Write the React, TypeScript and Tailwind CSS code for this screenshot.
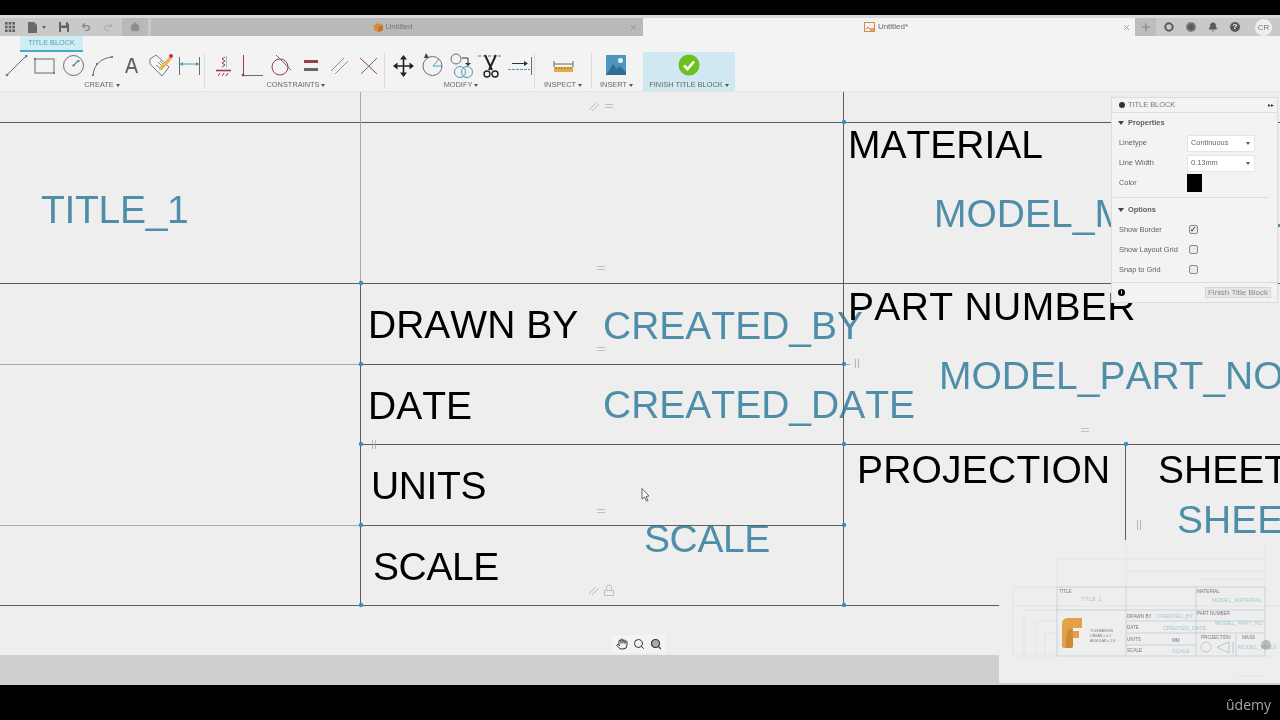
import React from 'react';
import { Bell, Hand, Home, Plus, Redo2, Search, Undo2, X } from 'lucide-react';

const LINE = '#6b6b6b';
const PT = '#4a8aa8';
const RED = '#97404a';

function Dot({ x, y }: { x: number; y: number }) {
  return <circle cx={x} cy={y} r="2.2" fill="#2f93c4" />;
}

function Tool({ children }: { children: React.ReactNode }) {
  return (
    <svg viewBox="0 0 29 27" className="w-[29px] h-[27px] shrink-0" fill="none">
      {children}
    </svg>
  );
}

function Group({ width, label, children, active }: { width: string; label: string; children: React.ReactNode; active?: boolean }) {
  return (
    <div className={`${width} ${active ? 'bg-[#cfe8f1]' : ''} flex flex-col shrink-0`}>
      <div className="h-[27px] flex justify-center">{children}</div>
      <div className="h-[12px] flex items-center justify-center gap-[2px] text-[7.4px] leading-none text-[#666666] whitespace-nowrap">
        {label}
        <span className="w-0 h-0 border-x-[2px] border-x-transparent border-t-[3px] border-t-[#555555]" />
      </div>
    </div>
  );
}

function Sep() {
  return <div className="w-px h-[36px] mt-[1px] bg-[#dcdcdc] shrink-0" />;
}

function CreateTools() {
  return (
    <>
      <Tool>
        <path d="M6 23 25 4" stroke={LINE} />
        <rect x="4.8" y="21.8" width="2.4" height="2.4" fill={PT} />
        <rect x="24" y="3" width="2.4" height="2.4" fill={PT} />
      </Tool>
      <Tool>
        <rect x="5" y="7" width="19" height="14" stroke={LINE} />
        <rect x="4" y="6" width="2" height="2" fill={PT} />
        <rect x="23" y="20" width="2" height="2" fill={PT} />
      </Tool>
      <Tool>
        <circle cx="14.5" cy="13.5" r="10" stroke={LINE} />
        <path d="M14.5 13.5 19 9" stroke={PT} strokeWidth="1.2" />
        <rect x="13.5" y="12.5" width="2" height="2" fill={PT} />
        <rect x="18.5" y="8" width="2" height="2" fill={PT} />
      </Tool>
      <Tool>
        <path d="M5 23C6 12 14 6 24 5" stroke={LINE} />
        <rect x="4" y="22" width="2" height="2" fill={PT} />
        <rect x="8" y="11" width="2" height="2" fill={PT} />
        <rect x="23" y="4" width="2" height="2" fill={PT} />
      </Tool>
      <Tool>
        <path d="M9 21 14 7h1.4L20 21M10.8 16h7.8" stroke="#5c6670" strokeWidth="2" />
      </Tool>
      <Tool>
        <path d="M4 7 10 3l13 12-7 9L4 12Z" fill="#f7f7f7" stroke="#777777" />
        <path d="M10 13l6 5M12 10l5 5M14 9l4 4" stroke="#888888" />
        <path d="M14 15 23 5l3 2-9 10-4 1Z" fill="#e9b84f" />
        <circle cx="25" cy="4" r="2" fill="#c5303a" />
      </Tool>
      <Tool>
        <path d="M4.5 5v18M24.5 5v18" stroke={LINE} />
        <path d="M5 12h19" stroke="#4a9ab8" />
        <path d="M5 12l3-2v4ZM24 12l-3-2v4Z" fill="#4a9ab8" />
      </Tool>
    </>
  );
}

function ConstraintTools() {
  return (
    <>
      <Tool>
        <path d="M16 5l-3 2 3 2-3 2 3 2-3 2" stroke={RED} />
        <path d="M17.5 4v11" stroke="#b0b0b0" />
        <path d="M7 18.5h15" stroke={RED} strokeWidth="1.6" />
        <path d="M9 24l2-3M13 24l2-3M17 24l2-3" stroke={RED} />
      </Tool>
      <Tool>
        <path d="M5.5 3v20" stroke={RED} />
        <path d="M5 23.5h20" stroke={LINE} />
        <rect x="3.8" y="21.8" width="2.4" height="2.4" fill={RED} />
      </Tool>
      <Tool>
        <circle cx="13" cy="15" r="8" stroke={RED} />
        <path d="M9 3l15 15" stroke={LINE} />
      </Tool>
      <Tool>
        <rect x="8" y="8" width="14" height="3" fill={RED} />
        <rect x="8" y="16" width="14" height="3" fill="#666666" />
      </Tool>
      <Tool>
        <path d="M6 19 19 6" stroke="#8a8a8a" />
        <path d="M10 22 23 9" stroke="#a98a8e" />
      </Tool>
      <Tool>
        <path d="M6 6 23 22" stroke={RED} />
        <path d="M7 22 23 6" stroke={LINE} />
      </Tool>
    </>
  );
}

function ModifyTools() {
  return (
    <>
      <Tool>
        <path d="M14.5 5v18M6 14h17" stroke="#222222" strokeWidth="1.6" />
        <path d="M14.5 3l3.5 4.5h-7ZM14.5 25l3.5-4.5h-7ZM4 14l4.5-3.5v7ZM25 14l-4.5-3.5v7Z" fill="#222222" />
      </Tool>
      <Tool>
        <circle cx="14.5" cy="14" r="9.5" stroke={LINE} />
        <path d="M15 14h9M15 14l6-7" stroke="#4a9ab8" />
        <path d="M8 1l-2 5 5 0Z" fill="#444444" />
      </Tool>
      <Tool>
        <circle cx="9" cy="7" r="5" stroke={LINE} />
        <path d="M15 6h6v6" stroke="#333333" />
        <path d="M21 14l-3-3h6Z" fill="#333333" />
        <circle cx="13" cy="20" r="5.5" stroke="#4a9ab8" />
        <circle cx="20" cy="20" r="5.5" stroke="#4a9ab8" />
      </Tool>
      <Tool>
        <path d="M2 4h24" stroke={LINE} strokeDasharray="3 2" />
        <path d="M9 3l7 15M20 3l-7 15" stroke="#222222" strokeWidth="2" />
        <circle cx="11" cy="22" r="3" stroke="#222222" strokeWidth="1.4" />
        <circle cx="19" cy="22" r="3" stroke="#222222" strokeWidth="1.4" />
      </Tool>
      <Tool>
        <path d="M7 11.5h14" stroke="#333333" />
        <path d="M23 11.5l-4-2.5v5Z" fill="#333333" />
        <path d="M26.5 5v18" stroke={LINE} />
        <path d="M3 17.5h22" stroke="#4a9ab8" strokeDasharray="3 1" />
      </Tool>
    </>
  );
}

function Toolbar() {
  return (
    <div className="h-[56px] bg-[#f3f3f3] border-b border-[#e6e6e6] shrink-0 flex flex-col">
      <div className="h-[16px] pl-[20px] shrink-0">
        <div className="w-[63px] h-[16px] bg-[#d2ecf3] border-b-2 border-[#45aac6] flex items-center justify-center text-[7.3px] leading-none text-[#4ba3bd] whitespace-nowrap">
          TITLE BLOCK
        </div>
      </div>
      <div className="flex h-[39px]">
        <Group width="w-[204px]" label="CREATE">
          <CreateTools />
        </Group>
        <Sep />
        <div className="w-[3px] shrink-0" />
        <Group width="w-[176px]" label="CONSTRAINTS">
          <ConstraintTools />
        </Group>
        <Sep />
        <div className="w-[3px] shrink-0" />
        <Group width="w-[146px]" label="MODIFY">
          <ModifyTools />
        </Group>
        <Sep />
        <Group width="w-[56px]" label="INSPECT">
          <Tool>
            <path d="M5 9v6M24 9v6M5 12h19" stroke={LINE} />
            <rect x="5" y="15" width="19" height="5" fill="#e1ad45" />
            <path d="M7 15v2M10 15v2M13 15v2M16 15v2M19 15v2M22 15v2" stroke="#99742a" />
          </Tool>
        </Group>
        <Sep />
        <Group width="w-[49px]" label="INSERT">
          <Tool>
            <rect x="4" y="3" width="20" height="20" fill="#4a98bf" />
            <path d="M4 23 11 12l4 5 3-3 6 6v3Z" fill="#2f6f96" />
            <circle cx="18.5" cy="8.5" r="2.5" fill="#e8f2f7" />
          </Tool>
        </Group>
        <div className="w-[2px] shrink-0" />
        <Group width="w-[92px]" label="FINISH TITLE BLOCK" active>
          <svg viewBox="0 0 22 22" className="w-[22px] h-[22px] mt-[2px]">
            <circle cx="11" cy="11" r="10.5" fill="#6cc11f" />
            <path d="M6 11.5 9.5 15 16 7.5" stroke="#ffffff" strokeWidth="2.6" fill="none" />
          </svg>
        </Group>
      </div>
    </div>
  );
}

function TabBar() {
  return (
    <div className="h-[18px] bg-[#c9c9c9] flex shrink-0 text-[8px] text-[#777777]">
      <div className="w-[122px] flex items-center shrink-0 text-[#666666]">
        <svg viewBox="0 0 10 10" className="w-[10px] h-[10px] ml-[5px]" fill="#606060">
          <rect x="0" y="0" width="2.6" height="2.6" /><rect x="3.7" y="0" width="2.6" height="2.6" /><rect x="7.4" y="0" width="2.6" height="2.6" />
          <rect x="0" y="3.7" width="2.6" height="2.6" /><rect x="3.7" y="3.7" width="2.6" height="2.6" /><rect x="7.4" y="3.7" width="2.6" height="2.6" />
          <rect x="0" y="7.4" width="2.6" height="2.6" /><rect x="3.7" y="7.4" width="2.6" height="2.6" /><rect x="7.4" y="7.4" width="2.6" height="2.6" />
        </svg>
        <svg viewBox="0 0 9 11" className="w-[9px] h-[11px] ml-[13px]" fill="#6a6a6a">
          <path d="M0 0h6l3 3v8H0Z" />
        </svg>
        <span className="ml-[5px] w-0 h-0 border-x-[2px] border-x-transparent border-t-[3px] border-t-[#666666]" />
        <svg viewBox="0 0 10 10" className="w-[10px] h-[10px] ml-[13px]">
          <path d="M0 0h8l2 2v8H0Z" fill="#666666" />
          <rect x="2" y="0" width="5" height="3.5" fill="#c9c9c9" />
          <rect x="2" y="6" width="6" height="4" fill="#c9c9c9" />
        </svg>
        <Undo2 className="w-[10px] h-[10px] ml-[12px] text-[#777777]" strokeWidth={2.5} />
        <Redo2 className="w-[10px] h-[10px] ml-[12px] text-[#a0a0a0]" strokeWidth={2} />
      </div>
      <div className="w-[26px] bg-[#b9b9b9] flex items-center justify-center shrink-0">
        <Home className="w-[10px] h-[10px] text-[#8e8e8e] fill-[#8e8e8e]" />
      </div>
      <div className="w-[3px] shrink-0" />
      <div className="w-[492px] bg-[#b9b9b9] flex items-center justify-center relative shrink-0 pr-[7px]">
        <svg viewBox="0 0 10 10" className="w-[9px] h-[9px] mr-[2px]">
          <path d="M5 0 10 2.5V8L5 10 0 8V2.5Z" fill="#dd8838" />
          <path d="M5 5 10 2.5V8L5 10Z" fill="#c56f25" />
        </svg>
        Untitled
        <X className="absolute right-[5px] w-[9px] h-[9px] text-[#8a8a8a]" />
      </div>
      <div className="w-[492px] bg-[#f3f3f3] flex items-center justify-center relative shrink-0 text-[#666666] pr-[6px]">
        <svg viewBox="0 0 11 10" className="w-[11px] h-[10px] mr-[3px]" fill="none">
          <rect x="0.5" y="0.5" width="10" height="9" stroke="#d68a45" />
          <path d="M2 7.5 4 5l2 2.5" stroke="#888888" />
          <rect x="6" y="6" width="4" height="3" fill="#e4a25f" />
        </svg>
        Untitled*
        <X className="absolute right-[4px] w-[9px] h-[9px] text-[#888888]" />
      </div>
      <div className="w-[21px] bg-[#bdbdbd] flex items-center justify-center shrink-0">
        <Plus className="w-[12px] h-[12px] text-[#8a8a8a]" strokeWidth={2.5} />
      </div>
      <div className="flex-1 flex items-center pl-[8px] gap-[12px] text-[#5f5f5f]">
        <svg viewBox="0 0 10 10" className="w-[10px] h-[10px]" fill="none">
          <circle cx="5" cy="5" r="3.7" stroke="#5a5a5a" strokeWidth="2" />
          <path d="M6 0h4v3Z" fill="#c9c9c9" />
        </svg>
        <svg viewBox="0 0 10 10" className="w-[10px] h-[10px]">
          <circle cx="5" cy="5" r="5" fill="#7c7c7c" />
          <circle cx="5" cy="5" r="3" fill="#5a5a5a" />
        </svg>
        <Bell className="w-[10px] h-[10px] text-[#5a5a5a] fill-[#5a5a5a]" />
        <div className="w-[10px] h-[10px] rounded-full bg-[#5a5a5a] text-white text-[8px] font-bold leading-[10px] text-center">?</div>
        <div className="ml-[3px] w-[17px] h-[17px] rounded-full bg-[#eeeeee] text-[#777777] text-[8px] leading-[17px] text-center">CR</div>
      </div>
    </div>
  );
}

function Check({ on }: { on?: boolean }) {
  return (
    <div className="w-[9px] h-[9px] -mt-[1px] rounded-[2px] border border-[#8a8a8a] bg-[#eaeaea] flex items-center justify-center text-[8px] leading-none text-black">
      {on ? '✓' : ''}
    </div>
  );
}

function Row({ label, children }: { label: string; children: React.ReactNode }) {
  return (
    <div className="h-[20px] flex items-center pl-[7px]">
      <div className="w-[68px] text-[#5f5f5f] whitespace-nowrap">{label}</div>
      {children}
    </div>
  );
}

function Select({ value }: { value: string }) {
  return (
    <div className="w-[68px] h-[17px] bg-white border border-[#e4e4e4] flex items-center justify-between pl-[3px] pr-[4px] text-[#666666]">
      {value}
      <span className="w-0 h-0 border-x-[2px] border-x-transparent border-t-[3px] border-t-[#555555]" />
    </div>
  );
}

function Heading({ label }: { label: string }) {
  return (
    <div className="h-[20px] flex items-center pl-[6px] gap-[4px] font-bold text-[#5f5f5f]">
      <span className="w-0 h-0 border-x-[3px] border-x-transparent border-t-[4px] border-t-[#444444]" />
      {label}
    </div>
  );
}

function Panel() {
  return (
    <div className="absolute left-[1111px] top-[5px] w-[167px] h-[206px] bg-[#f3f3f3] border border-[#dddddd] flex flex-col text-[7.4px] leading-none">
      <div className="h-[15px] border-b border-[#dddddd] flex items-center pl-[7px] pr-[3px] text-[#777777] shrink-0">
        <span className="w-[6px] h-[6px] rounded-full bg-[#333333] mr-[3px]" />
        TITLE BLOCK
        <span className="ml-auto text-[6px] text-[#444444]">▸▸</span>
      </div>
      <Heading label="Properties" />
      <Row label="Linetype">
        <Select value="Continuous" />
      </Row>
      <Row label="Line Width">
        <Select value="0.13mm" />
      </Row>
      <Row label="Color">
        <div className="w-[15px] h-[18px] bg-black" />
      </Row>
      <div className="h-px bg-[#dddddd] mx-[1px] mt-[4px] mr-[8px] mb-[2px] shrink-0" />
      <Heading label="Options" />
      <Row label="Show Border">
        <div className="ml-[2px]"><Check on /></div>
      </Row>
      <Row label="Show Layout Grid">
        <div className="ml-[2px]"><Check /></div>
      </Row>
      <Row label="Snap to Grid">
        <div className="ml-[2px]"><Check /></div>
      </Row>
      <div className="mt-[2px] border-t border-[#dddddd] flex-1 flex items-center justify-between pl-[6px] pr-[6px]">
        <div className="w-[7px] h-[7px] rounded-full bg-black text-white text-[6px] font-bold leading-[7px] text-center">i</div>
        <div className="h-[11px] px-[2px] bg-[#e6e6e6] border border-[#d6d6d6] text-[#8a8a8a] text-[8px] flex items-center whitespace-nowrap">Finish Title Block</div>
      </div>
    </div>
  );
}

function Drawing() {
  return (
    <svg viewBox="0 92 1280 563" className="absolute inset-0 w-[1280px] h-[563px]" fill="none">
      <g stroke="#5e5e5e" strokeWidth="1">
        <path d="M0 122.5H1280M0 283.5H1280M360 364.5H843M360 444.5H1280M360 525.5H843M0 605.5H999" />
        <path d="M360.5 283V605M843.5 92V605M1125.5 445V540" />
      </g>
      <g stroke="#a9a9a9" strokeWidth="1">
        <path d="M360.5 92V283M0 364.5H360M0 525.5H360M844 364.5H850" />
      </g>
      <Dot x={844} y={122} /><Dot x={361} y={283} /><Dot x={361} y={364} /><Dot x={844} y={364} /><Dot x={361} y={444} />
      <Dot x={844} y={444} /><Dot x={1126} y={444} /><Dot x={361} y={525} /><Dot x={844} y={525} /><Dot x={361} y={605} /><Dot x={844} y={605} />
      <g stroke="#ababab" strokeWidth="0.7">
        <path d="M589 110 596 103M592 111 599 104" />
        <path d="M605 104.5H613M605 107.5H613" />
        <path d="M597 266.5H605M597 269.5H605" />
        <path d="M597 347.5H605M597 350.5H605" />
        <path d="M597 509.5H605M597 512.5H605" />
        <path d="M1081 428.5H1089M1081 431.5H1089" />
        <path d="M589 594 596 587M592 595 599 588" />
        <path d="M604.5 590.5H613.5V595.5H604.5Z M606.5 590V587.5a2.5 2.5 0 0 1 5 0V590" />
      </g>
      <g stroke="#b98f96" strokeWidth="0.7">
        <path d="M372.5 440V449M375.5 440V449" />
        <path d="M855.5 359V368M858.5 359V368" />
        <path d="M1137.5 520V530M1140.5 520V530" />
      </g>
      <path d="M642 488.5V499L644.5 497 646.5 501 648 500.5 646 496.5 649 496Z" fill="#ffffff" stroke="#444444" strokeWidth="0.8" />
    </svg>
  );
}

function Labels() {
  const black = 'absolute text-[39px] leading-none text-black whitespace-nowrap [font-kerning:none]';
  const blue = 'absolute text-[39px] leading-none text-[#4f8ea9] whitespace-nowrap [font-kerning:none]';
  return (
    <>
      <div className={`${blue} left-[41px] top-[98px] tracking-[-0.3px]`}>TITLE_1</div>
      <div className={`${black} left-[848px] top-[33px]`}>MATERIAL</div>
      <div className={`${blue} left-[934px] top-[102px]`}>MODEL_MATERIAL</div>
      <div className={`${black} left-[368px] top-[213px]`}>DRAWN BY</div>
      <div className={`${blue} left-[603px] top-[214px]`}>CREATED_BY</div>
      <div className={`${black} left-[848px] top-[195px] tracking-[0.35px]`}>PART NUMBER</div>
      <div className={`${blue} left-[939px] top-[264px]`}>MODEL_PART_NO</div>
      <div className={`${black} left-[368px] top-[294px]`}>DATE</div>
      <div className={`${blue} left-[603px] top-[293px]`}>CREATED_DATE</div>
      <div className={`${black} left-[371px] top-[374px] tracking-[-0.4px]`}>UNITS</div>
      <div className={`${black} left-[857px] top-[358px] tracking-[0.2px]`}>PROJECTION</div>
      <div className={`${black} left-[1158px] top-[358px]`}>SHEET</div>
      <div className={`${blue} left-[1177px] top-[408px]`}>SHEET</div>
      <div className={`${black} left-[373px] top-[455px] tracking-[-0.4px]`}>SCALE</div>
      <div className={`${blue} left-[644px] top-[427px] tracking-[-0.4px]`}>SCALE</div>
    </>
  );
}

function Minimap() {
  const t = 'fill-[#777777]';
  const b = 'fill-[#a5c6d4]';
  return (
    <svg viewBox="999 541 281 142" className="absolute left-[999px] top-[449px] w-[281px] h-[142px] bg-[#eeeeee]" fill="none" fontSize="4.6">
      <g stroke="#dedede" strokeWidth="0.6">
        <path d="M1057 559H1265M1126 541V587M1126 571H1265M1197 579H1265M1013 606H1280" />
        <path d="M1013 587H1057M1024 610H1057M1036 621H1057M1045 633H1057M1013 656H1057M1265 656H1276M1236 676H1265" />
        <path d="M1013 587V656M1024 610V656M1036 621V656M1045 633V656M1057 559V587M1265 541V587" />
      </g>
      <g stroke="#b9c6cc" strokeWidth="0.7">
        <path d="M1057 587H1265V656H1057ZM1126 587V656M1196 587V656M1057 610H1265M1126 621H1265M1126 633H1196M1126 645H1196M1196 633H1265M1236 633V656" />
      </g>
      <path d="M1062 646V624Q1062 618 1068 618H1082V628H1073V631H1079V638H1073V646Q1073 648 1070 648H1064Q1062 648 1062 646Z" fill="#e3a04a" />
      <path d="M1071 628Q1066 630 1066 640V648H1070Q1073 648 1073 646V631Z" fill="#cf8a35" />
      <text x="1059" y="593" className={t}>TITLE</text>
      <text x="1081" y="601" className={b} fontSize="5.5">TITLE_1</text>
      <text x="1197" y="593" className={t}>MATERIAL</text>
      <text x="1212" y="602" className={b} fontSize="5.5">MODEL_MATERIAL</text>
      <text x="1127" y="618" className={t}>DRAWN BY</text>
      <text x="1157" y="618" className={b} fontSize="5.5">CREATED_BY</text>
      <text x="1197" y="615" className={t}>PART NUMBER</text>
      <text x="1215" y="625" className={b} fontSize="5.5">MODEL_PART_NO</text>
      <text x="1127" y="629" className={t}>DATE</text>
      <text x="1163" y="630" className={b} fontSize="5.5">CREATED_DATE</text>
      <text x="1127" y="641" className={t}>UNITS</text>
      <text x="1172" y="642" className={t}>MM</text>
      <text x="1201" y="639" className={t}>PROJECTION</text>
      <text x="1242" y="639" className={t}>MASS</text>
      <text x="1127" y="652" className={t}>SCALE</text>
      <text x="1172" y="653" className={b} fontSize="5.5">SCALE</text>
      <text x="1238" y="649" className={b} fontSize="5.5">MODEL_MASS</text>
      <text x="1090" y="632" className={t} fontSize="3.4">TOLERANCES</text>
      <text x="1090" y="637" className={t} fontSize="3.4">LINEAR = 0.2</text>
      <text x="1090" y="642" className={t} fontSize="3.4">ANGULAR = 1.0°</text>
      <circle cx="1206" cy="647" r="5" stroke="#b9c6cc" />
      <path d="M1217 647 1229 642V653ZM1233 642V653" stroke="#b9c6cc" />
      <circle cx="1266" cy="645" r="5" fill="#8a8a8a" fillOpacity="0.5" />
    </svg>
  );
}

export default function App() {
  return (
    <div className="w-[1280px] h-[720px] bg-black flex flex-col overflow-hidden font-['Liberation_Sans',Arial,sans-serif] blur-[0.3px]">
      <div className="h-[15px] bg-black shrink-0" />
      <div className="h-[3px] bg-[#d9d9d9] shrink-0" />
      <TabBar />
      <Toolbar />
      <div className="relative flex flex-col h-[593px] shrink-0">
        <div className="relative h-[563px] bg-[#eeeeee] overflow-hidden shrink-0">
          <Labels />
          <Drawing />
          <Panel />
          <div className="absolute left-[612px] top-[543px] h-[18px] w-[54px] bg-[#f3f3f3] flex items-center justify-center gap-[5px]">
            <Hand className="w-[12px] h-[12px] text-[#333333]" />
            <Search className="w-[12px] h-[12px] text-[#333333]" />
            <Search className="w-[12px] h-[12px] text-[#333333] fill-[#aaaaaa]" strokeWidth={2.4} />
          </div>
        </div>
        <div className="h-[30px] bg-[#cfcfcf] shrink-0" />
        <Minimap />
      </div>
      <div className="flex-1 flex items-center justify-end pr-[9px] pt-[4px] text-[14px] text-[#a6a6a6] font-['Open_Sans',sans-serif]">
        ûdemy
      </div>
    </div>
  );
}
